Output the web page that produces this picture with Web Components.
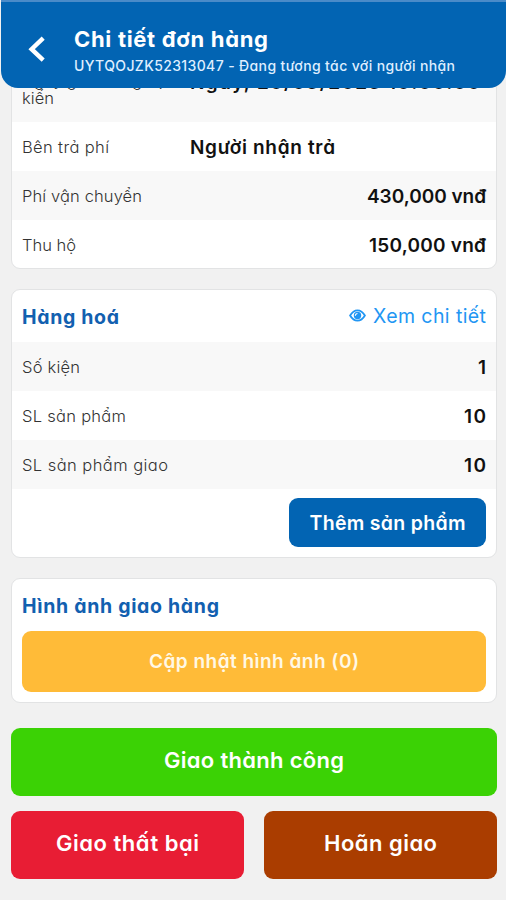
<!DOCTYPE html>
<html lang="vi">
<head>
<meta charset="utf-8">
<title>Chi tiết đơn hàng</title>
<style>
html,body{margin:0;height:100%;overflow:hidden;background:#f1f1f1}
body{font-family:Inter,"Noto Sans",sans-serif;font-feature-settings:"cv11";color:#111}
</style>
</head>
<body>
<order-page></order-page>
<script>
function define(name, html, after) {
  const t = document.createElement('template');
  t.innerHTML = html;
  customElements.define(name, class extends HTMLElement {
    constructor() { super(); this.attachShadow({mode: 'open'}).append(t.content.cloneNode(true)); }
    connectedCallback() { if (after) after(this); }
  });
}

// Text set to a given width through letter spacing.
define('ui-text', `<style>
:host{display:block;white-space:nowrap;flex:none}
span{display:inline-block}
</style><span><slot></slot></span>`, el => {
  const s = el.shadowRoot.querySelector('span');
  const want = +el.getAttribute('w');
  if (!want) return;
  const n = [...el.textContent].length;
  const gap = (want - s.getBoundingClientRect().width) / (n - 1);
  s.style.letterSpacing = gap + 'px';
  s.style.marginRight = -gap + 'px';
});

define('app-bar', `<style>
:host{display:flex;box-sizing:border-box;height:88px;margin:0 0 0 1px;padding:25px 0 0 27px;background:#0264b3;border-top:2px solid #4a8bc9;border-radius:0 0 17px 17px;color:#fff;position:relative;z-index:1}
svg{width:18px;height:28px;margin-top:8px;margin-right:28px;flex:none}
.t{font-size:22px;line-height:26px;font-weight:700;margin-top:-1px}
.s{font-size:14px;line-height:20px;font-weight:500;margin-top:4px;color:#dfeeff}
</style>
<svg viewBox="0 0 18 28"><path d="M15.2 3.2 L3.6 14.2 L15.2 25.2" fill="none" stroke="#fff" stroke-width="4.4"/></svg>
<div><ui-text class="t" w="194">Chi tiết đơn hàng</ui-text>
<ui-text class="s" w="381">UYTQOJZK52313047 - Đang tương tác với người nhận</ui-text></div>`);

define('ui-card', `<style>
:host{display:block;box-sizing:border-box;background:#fff;border:1px solid #e2e3e4;border-radius:9px;overflow:hidden}
</style><slot></slot>`);

define('info-row', `<style>
:host{display:flex;box-sizing:border-box;align-items:center;height:49px;padding:0 10px;font-size:16.5px;line-height:20px}
:host([shade]){background:#f8f8f8}
:host([start]) .v{margin-left:0;margin-right:auto}
:host([start]) .l{width:168px}
.l{color:#333;font-weight:300}
.v{margin-left:auto;padding-top:2px;font-size:19px;font-weight:600;color:#111}
</style><div class="l"><slot name="label"></slot></div><div class="v"><slot></slot></div>`);

define('card-head', `<style>
:host{display:flex;box-sizing:border-box;align-items:center;justify-content:space-between;padding:2px 10px 0;color:#1260b0;font-size:19.5px;font-weight:700}
</style><slot></slot>`);

define('detail-link', `<style>
:host{display:flex;align-items:center;gap:7px;color:#2296f3;font-size:19.5px;font-weight:400;margin-top:-3px}
svg{width:17px;height:13px}
</style>
<svg viewBox="0 0 17 13"><path d="M1.1 6.5C3.1 3 5.6 1.3 8.5 1.3S13.9 3 15.9 6.5C13.9 10 11.4 11.7 8.5 11.7S3.1 10 1.1 6.5Z" fill="none" stroke="currentColor" stroke-width="1.8"/><circle cx="8.5" cy="6.5" r="3.7" fill="currentColor"/><path d="M6.4 6.7A2.1 2.1 0 0 1 8.5 4.5" fill="none" stroke="#fff" stroke-width="1.2"/></svg>
<slot></slot>`);

define('ui-button', `<style>
:host{display:flex;box-sizing:border-box;align-items:center;justify-content:center;border-radius:9px;background:var(--bg);height:var(--h);padding-bottom:var(--lift,0px);color:#fff;font-size:var(--fs,20px);font-weight:600}
</style><slot></slot>`);

define('order-page', `<style>
:host{display:block;height:900px;overflow:hidden}
main{padding:0 9px 0 11px}
.first{margin-top:-16px;height:197px}
.first .note{height:49px;align-items:flex-start}
.note .hid{line-height:18px;margin-top:-2px}
.note .when{margin-top:-2px}
.goods{margin-top:20px;height:269px}
.goods card-head,.photo card-head{height:52px}
.goods ui-button{--bg:#0264b3;--h:49px;--fs:19.5px;width:197px;margin:9px 10px 0 auto}
.photo{margin-top:20px;height:125px}
.photo ui-button{--bg:#ffbb38;--h:61px;margin:0 10px;color:#fff8e5;--fs:19px}
.ok{--bg:#3bd205;--h:68px;--fs:22px;--lift:3px;margin-top:24.5px}
.pair{display:grid;grid-template-columns:1fr 1fr;gap:20px;margin-top:15px}
.pair ui-button{--h:68px;--fs:22px;--lift:3px}
</style>
<app-bar></app-bar>
<main>
<ui-card class="first">
<info-row shade start class="note"><div slot="label" class="hid"><ui-text w="144">Ngày giao hàng dự</ui-text><ui-text w="32">kiến</ui-text></div><ui-text class="when" w="290">Ngày, 20/03/2023 10:00:00</ui-text></info-row>
<info-row start><ui-text slot="label" w="87">Bên trả phí</ui-text><ui-text w="145">Người nhận trả</ui-text></info-row>
<info-row shade><ui-text slot="label" w="120">Phí vận chuyển</ui-text><ui-text w="119">430,000 vnđ</ui-text></info-row>
<info-row><ui-text slot="label" w="54">Thu hộ</ui-text><ui-text w="117">150,000 vnđ</ui-text></info-row>
</ui-card>
<ui-card class="goods">
<card-head><ui-text w="97">Hàng hoá</ui-text><detail-link><ui-text w="113">Xem chi tiết</ui-text></detail-link></card-head>
<info-row shade><ui-text slot="label" w="58">Số kiện</ui-text><ui-text>1</ui-text></info-row>
<info-row><ui-text slot="label" w="104">SL sản phẩm</ui-text><ui-text w="22">10</ui-text></info-row>
<info-row shade><ui-text slot="label" w="146">SL sản phẩm giao</ui-text><ui-text w="22">10</ui-text></info-row>
<ui-button><ui-text w="156">Thêm sản phẩm</ui-text></ui-button>
</ui-card>
<ui-card class="photo">
<card-head><ui-text w="197">Hình ảnh giao hàng</ui-text></card-head>
<ui-button><ui-text w="210">Cập nhật hình ảnh (0)</ui-text></ui-button>
</ui-card>
<ui-button class="ok"><ui-text w="180">Giao thành công</ui-text></ui-button>
<div class="pair">
<ui-button style="--bg:#e81d34"><ui-text w="143">Giao thất bại</ui-text></ui-button>
<ui-button style="--bg:#aa3d00"><ui-text w="113">Hoãn giao</ui-text></ui-button>
</div>
</main>`);
</script>
</body>
</html>
